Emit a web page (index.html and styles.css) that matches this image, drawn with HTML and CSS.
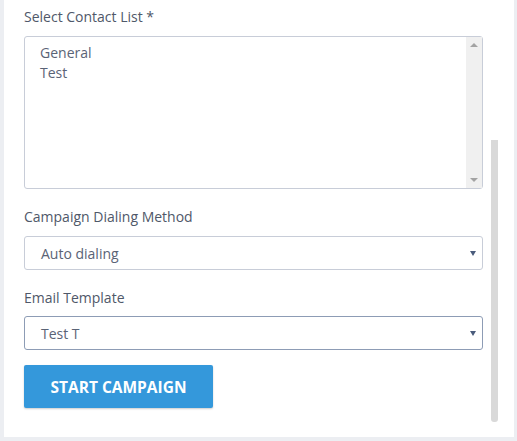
FILE: index.html
```html
<!DOCTYPE html>
<html>
<head>
<meta charset="utf-8">
<link rel="stylesheet" href="styles.css">
</head>
<body>
<div class="panel">
  <div class="content">
    <div class="field">
      <label class="label">Select Contact List *</label>
      <div class="listbox">
        <div class="options">
          <div class="option">General</div>
          <div class="option">Test</div>
        </div>
        <div class="list-scroll">
          <span class="arrow-up"></span>
          <span class="arrow-down"></span>
        </div>
      </div>
    </div>
    <div class="field">
      <label class="label">Campaign Dialing Method</label>
      <div class="select">
        <span>Auto dialing</span>
        <span class="caret"></span>
      </div>
    </div>
    <div class="field">
      <label class="label tight">Email Template</label>
      <div class="select focused">
        <span>Test T</span>
        <span class="caret"></span>
      </div>
    </div>
    <button class="btn">START CAMPAIGN</button>
  </div>
  <div class="page-scroll"><div class="thumb"></div></div>
</div>
</body>
</html>
```
FILE: styles.css
```css
html, body {
  margin: 0;
  padding: 0;
  background: #eceef2;
  width: 517px;
  height: 441px;
  overflow: hidden;
}
.panel {
  margin-left: 4px;
  width: 510px;
  height: 437px;
  background: #ffffff;
  display: flex;
  font-family: "Open Sans", sans-serif;
  font-size: 14px;
  color: #4f5869;
}
.content {
  padding: 7px 0 0 20px;
  width: 459px;
  display: flex;
  flex-direction: column;
}
.field {
  display: flex;
  flex-direction: column;
}
.label {
  line-height: 20px;
  height: 20px;
  margin-bottom: 9px;
}
.label.tight {
  margin-bottom: 8px;
}
.listbox {
  height: 151px;
  border: 1px solid #c8cdd8;
  border-radius: 3px;
  display: flex;
  margin-bottom: 18px;
}
.options {
  flex: 1;
  padding: 6px 0 0 15px;
  color: #5a6376;
}
.option {
  line-height: 20px;
}
.list-scroll {
  width: 16px;
  background: #f0f0f0;
  position: relative;
}
.arrow-up, .arrow-down {
  position: absolute;
  left: 4px;
  width: 0;
  height: 0;
  border-left: 4px solid transparent;
  border-right: 4px solid transparent;
}
.arrow-up {
  top: 6px;
  border-bottom: 4px solid #a3a3a3;
}
.arrow-down {
  bottom: 6px;
  border-top: 4px solid #a3a3a3;
}
.select {
  height: 32px;
  border: 1px solid #c8cdd8;
  border-radius: 3px;
  display: flex;
  align-items: center;
  justify-content: space-between;
  padding: 0 6px 0 16px;
  color: #5a6376;
  margin-bottom: 18px;
}
.select.focused {
  border-color: #8d9cb5;
  margin-bottom: 15px;
}
.caret {
  width: 0;
  height: 0;
  border-left: 3.5px solid transparent;
  border-right: 3.5px solid transparent;
  border-top: 5px solid #4a5c7c;
  margin-top: 1px;
}
.btn {
  align-self: flex-start;
  width: 189px;
  height: 43px;
  border: none;
  border-radius: 2px;
  background: #3498db;
  color: #ffffff;
  font-family: "Open Sans", sans-serif;
  font-weight: 700;
  font-size: 15.5px;
  box-shadow: 0 1px 2px rgba(0,0,0,0.2);
  padding: 0;
}
.page-scroll {
  width: 7px;
  margin-left: 8px;
  display: flex;
  flex-direction: column;
  justify-content: flex-end;
}
.thumb {
  height: 282px;
  margin-bottom: 15px;
  background: #d9d9d9;
  border-radius: 0 0 3px 3px;
}
```
